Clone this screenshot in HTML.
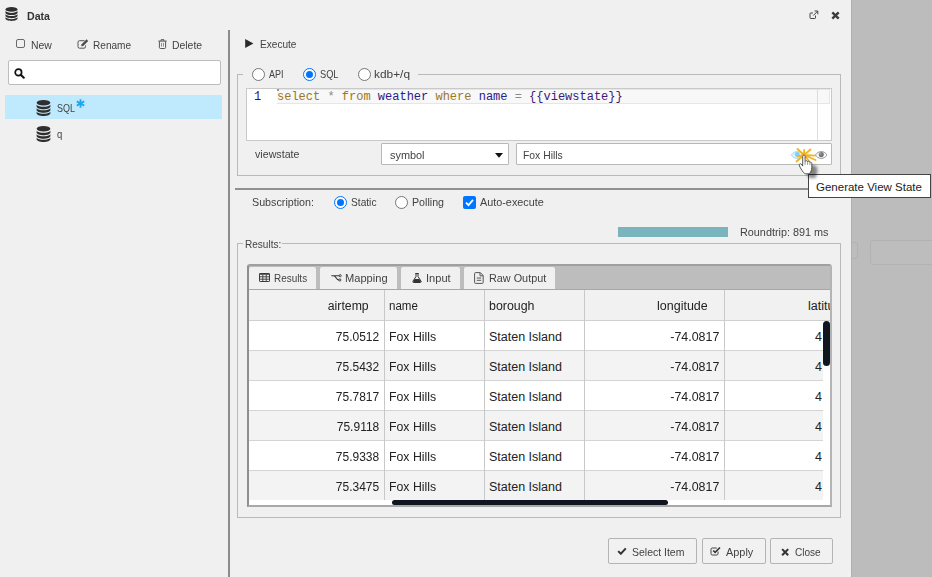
<!DOCTYPE html>
<html>
<head>
<meta charset="utf-8">
<title>Data</title>
<style>
html,body{margin:0;padding:0;}
body{width:932px;height:577px;overflow:hidden;background:#bcbcbc;position:relative;
  font-family:"Liberation Sans",sans-serif;font-size:11px;color:#333;}
*{box-sizing:border-box;}
.abs{position:absolute;}
svg.abs{z-index:2;}
.t{position:absolute;white-space:nowrap;line-height:14px;font-size:11.5px;transform-origin:0 50%;color:#424242;}
#dlg{position:absolute;left:0;top:0;width:851px;height:577px;background:#f0f0f0;}
/* behind overlay */
.ghost{position:absolute;border:1px solid #b2b2b2;border-radius:3px;background:#bdbdbd;}
/* left pane */
#search{left:8px;top:60px;width:213px;height:25px;background:#fff;border:1px solid #bdbdbd;border-radius:2px;}
#selrow{left:5px;top:95px;width:217px;height:24px;background:#bfe9fd;}
#vdiv{left:228px;top:30px;width:2px;height:547px;background:#8c8c8c;}
/* right pane */
fieldset{margin:0;padding:0;}
.fs{position:absolute;border:1px solid #b9b9b9;}
.radio{position:absolute;width:13px;height:13px;border-radius:50%;border:1px solid #767676;background:#fff;}
.radio.on{border:1.5px solid #0075ff;}
.radio.on::after{content:"";position:absolute;left:1.5px;top:1.5px;width:7px;height:7px;border-radius:50%;background:#0075ff;}
#editor{left:246px;top:88px;width:586px;height:53px;background:#fff;border:1px solid #c9c9c9;}
.code{font-family:"Liberation Mono",monospace;font-size:12px;line-height:14px;}
.kw{color:#9e7622;} .id{color:#2a1a8a;} .op{color:#8a8a8a;} .vs{color:#3b1a7a;}
.inp{position:absolute;background:#fff;border:1px solid #b8b8b8;border-radius:1px;height:22px;}
#hr{left:235px;top:188px;width:607px;height:2px;background:#909090;}
/* tabs + grid */
#tabs{left:247px;top:264px;width:585px;height:243px;background:#bdbdbd;border-radius:3px 3px 0 0;border-left:2px solid #8e8e8e;border-top:2px solid #a0a0a0;border-right:2px solid #b4b4b4;border-bottom:2px solid #a8a8a8;overflow:hidden;}
.tab{position:absolute;top:267px;height:22px;background:#f0f0f0;border-radius:2px 2px 0 0;}
#grid{left:249px;top:290px;width:581px;height:215px;background:#fff;overflow:hidden;}
.hrow{position:absolute;left:0;top:0;width:581px;height:31px;background:#f1f1f1;border-bottom:1px solid #d0d0d0;}
#rows{left:0;top:31px;width:574px;height:179px;overflow:hidden;}
.row{position:absolute;left:0;width:574px;height:30px;border-bottom:1px solid #d4d4d4;background:#fff;}
.row.alt{background:#f3f3f3;}
.cd{position:absolute;top:0;width:1px;height:210px;background:#c8c8c8;}
.gt{position:absolute;white-space:nowrap;font-size:12.5px;line-height:32px;height:30px;color:#222;transform-origin:0 50%;}
.gt.r{transform-origin:100% 50%;}
.btn{position:absolute;top:538px;height:26px;background:#f1f1f1;border:1px solid #b4b4b4;border-radius:2px;}
#tip{left:808px;top:174px;width:123px;height:24px;background:#fff;border:1px solid #444;}
</style>
<style id="fit">
#ttl{transform:scaleX(0.965)}
#tnew{transform:scaleX(0.908)}
#tren{transform:scaleX(0.876)}
#tdel{transform:scaleX(0.905)}
#tsql{transform:scaleX(0.782)}
#tq{transform:scaleX(0.827)}
#texe{transform:scaleX(0.878)}
#tapi{transform:scaleX(0.782)}
#tsql2{transform:scaleX(0.804)}
#tkdb{transform:scaleX(1.033)}
#tvs{transform:scaleX(0.928)}
#tsym{transform:scaleX(0.947)}
#tfox{transform:scaleX(0.901)}
#tsub{transform:scaleX(0.933)}
#tsta{transform:scaleX(0.886)}
#tpol{transform:scaleX(0.927)}
#taut{transform:scaleX(0.941)}
#trt{transform:scaleX(0.942)}
#tres{transform:scaleX(0.873)}
#tb1{transform:scaleX(0.863)}
#tb2{transform:scaleX(0.965)}
#tb3{transform:scaleX(0.962)}
#tb4{transform:scaleX(0.942)}
#tbs{transform:scaleX(0.911)}
#tba{transform:scaleX(0.949)}
#tbc{transform:scaleX(0.874)}
#ttip{transform:scaleX(1.000)}
.g-air{transform:scaleX(0.981)}
.g-name{transform:scaleX(0.924)}
.g-bor{transform:scaleX(0.992)}
.g-lon{transform:scaleX(0.999)}
.g-num{transform:scaleX(0.960)}
.g-fox{transform:scaleX(0.985)}
.g-si{transform:scaleX(1.000)}
.g-ln{transform:scaleX(0.995)}
</style>
</head>
<body>
<!-- ghost controls behind overlay -->
<div class="ghost" style="left:851px;top:242px;width:7px;height:17px;border-left:none;border-radius:0 3px 3px 0;"></div>
<div class="ghost" style="left:870px;top:240px;width:70px;height:25px;"></div>

<div class="abs" style="left:851px;top:0;width:1px;height:577px;background:#b0b0b0;"></div>
<div id="dlg">
  <!-- title -->
  <svg class="abs" style="left:5px;top:7px" width="13" height="14" viewBox="0 0 14 15.8"><g fill="#2f2f2f"><ellipse cx="7" cy="2.700" rx="6.800" ry="2.700"/><path d="M.2 4.600v1.800C.2 7.900 3.200 9.100 7 9.100s6.800-1.200 6.800-2.700V4.600C12.700 5.900 10 6.700 7 6.700S1.300 5.900.2 4.600z"/><path d="M.2 8.100v1.800c0 1.500 3 2.700 6.800 2.700s6.800-1.200 6.800-2.700V8.100C12.700 9.400 10 10.200 7 10.200S1.300 9.400.2 8.100z"/><path d="M.2 11.600v1.400c0 1.500 3 2.700 6.800 2.700s6.800-1.200 6.800-2.700v-1.400c-1.100 1.300-3.800 2.100-6.800 2.100S1.300 12.900.2 11.600z"/></g></svg>
  <div class="t" id="ttl" style="left:27px;top:9px;font-weight:bold;font-size:11px;color:#333;">Data</div>

  <!-- toolbar -->
  <div class="abs" style="left:16px;top:39px;width:9px;height:9px;border:1px solid #6a6a6a;border-radius:2px;"></div>
  <div class="t" id="tnew" style="left:31px;top:38px;">New</div>
  <div class="t" id="tren" style="left:93px;top:38px;">Rename</div>
  <div class="t" id="tdel" style="left:172px;top:38px;">Delete</div>

  <div class="abs" id="search"></div>
  <div class="abs" id="selrow"></div>
  <div class="t" id="tsql" style="left:57px;top:101px;">SQL</div>
  <div class="t" id="tq" style="left:57px;top:127px;">q</div>
  <div class="abs" id="vdiv"></div>

  <!-- execute -->
  <div class="t" id="texe" style="left:260px;top:37px;">Execute</div>

  <!-- query fieldset -->
  <div class="fs" style="left:237px;top:74px;width:604px;height:102px;"></div>
  <div class="abs" style="left:243px;top:70px;width:175px;height:10px;background:#f0f0f0;"></div>
  <div class="radio" style="left:252px;top:68px;"></div>
  <div class="t" id="tapi" style="left:269px;top:67px;">API</div>
  <div class="radio on" style="left:303px;top:68px;"></div>
  <div class="t" id="tsql2" style="left:320px;top:67px;">SQL</div>
  <div class="radio" style="left:358px;top:68px;"></div>
  <div class="t" id="tkdb" style="left:374px;top:67px;">kdb+/q</div>

  <div class="abs" id="editor"></div>
  <div class="abs" style="left:277px;top:89px;width:553px;height:15px;background:#f8f8f8;border:1px solid #e6e6e6;border-left:none;"></div>
  <div class="abs" style="left:817px;top:89px;width:1px;height:51px;background:#dcdcdc;"></div>
  <div class="abs" style="left:277px;top:89px;width:2px;height:2px;background:#999;"></div>
  <div class="t code" style="left:254px;top:90px;color:#1a1a8c;">1</div>
  <div class="t code" id="tcode" style="left:277px;top:90px;"><span class="kw">select</span> <span class="op">*</span> <span class="kw">from</span> <span class="id">weather</span> <span class="kw">where</span> <span class="id">name</span> <span class="op">=</span> <span class="vs">{{viewstate}}</span></div>

  <div class="t" id="tvs" style="left:255px;top:147px;">viewstate</div>
  <div class="inp" style="left:381px;top:143px;width:128px;"></div>
  <div class="t" id="tsym" style="left:390px;top:148px;">symbol</div>
  <div class="inp" style="left:516px;top:143px;width:316px;"></div>
  <div class="t" id="tfox" style="left:523px;top:148px;">Fox Hills</div>

  <div class="abs" id="hr"></div>

  <!-- subscription -->
  <div class="t" id="tsub" style="left:252px;top:195px;">Subscription:</div>
  <div class="radio on" style="left:334px;top:196px;"></div>
  <div class="t" id="tsta" style="left:351px;top:195px;">Static</div>
  <div class="radio" style="left:395px;top:196px;"></div>
  <div class="t" id="tpol" style="left:412px;top:195px;">Polling</div>
  <div class="abs" style="left:463px;top:196px;width:13px;height:13px;background:#0075ff;border-radius:2px;"></div>
  <div class="t" id="taut" style="left:480px;top:195px;">Auto-execute</div>

  <div class="abs" style="left:618px;top:227px;width:110px;height:10px;background:#7ab5be;"></div>
  <div class="t" id="trt" style="left:740px;top:225px;">Roundtrip: 891 ms</div>

  <!-- results fieldset -->
  <div class="fs" style="left:237px;top:243px;width:604px;height:275px;"></div>
  <div class="abs" style="left:243px;top:238px;width:39px;height:10px;background:#f0f0f0;"></div>
  <div class="t" id="tres" style="left:245px;top:237px;">Results:</div>

  <div class="abs" id="tabs"></div>
  <div class="tab" style="left:249px;width:67px;"></div>
  <div class="tab" style="left:320px;width:77px;"></div>
  <div class="tab" style="left:401px;width:59px;"></div>
  <div class="tab" style="left:464px;width:91px;"></div>
  <div class="abs" style="left:249px;top:289px;width:581px;height:1px;background:#a8a8a8;"></div>
  <div class="t" id="tb1" style="left:274px;top:271px;">Results</div>
  <div class="t" id="tb2" style="left:345px;top:271px;">Mapping</div>
  <div class="t" id="tb3" style="left:426px;top:271px;">Input</div>
  <div class="t" id="tb4" style="left:489px;top:271px;">Raw Output</div>

  <div class="abs" id="grid">
    <div class="hrow"></div>
    <div class="abs" id="rows">
      <div class="row" style="top:0px"><span class="gt r g-num" style="right:444px">75.0512</span><span class="gt g-fox" style="left:140px">Fox Hills</span><span class="gt g-si" style="left:240px">Staten Island</span><span class="gt r g-ln" style="right:104px">-74.0817</span><span class="gt g-lat" style="left:566px;width:7px;overflow:hidden">40.5772</span></div>
      <div class="row alt" style="top:30px"><span class="gt r g-num" style="right:444px">75.5432</span><span class="gt g-fox" style="left:140px">Fox Hills</span><span class="gt g-si" style="left:240px">Staten Island</span><span class="gt r g-ln" style="right:104px">-74.0817</span><span class="gt g-lat" style="left:566px;width:7px;overflow:hidden">40.5772</span></div>
      <div class="row" style="top:60px"><span class="gt r g-num" style="right:444px">75.7817</span><span class="gt g-fox" style="left:140px">Fox Hills</span><span class="gt g-si" style="left:240px">Staten Island</span><span class="gt r g-ln" style="right:104px">-74.0817</span><span class="gt g-lat" style="left:566px;width:7px;overflow:hidden">40.5772</span></div>
      <div class="row alt" style="top:90px"><span class="gt r g-num" style="right:444px">75.9118</span><span class="gt g-fox" style="left:140px">Fox Hills</span><span class="gt g-si" style="left:240px">Staten Island</span><span class="gt r g-ln" style="right:104px">-74.0817</span><span class="gt g-lat" style="left:566px;width:7px;overflow:hidden">40.5772</span></div>
      <div class="row" style="top:120px"><span class="gt r g-num" style="right:444px">75.9338</span><span class="gt g-fox" style="left:140px">Fox Hills</span><span class="gt g-si" style="left:240px">Staten Island</span><span class="gt r g-ln" style="right:104px">-74.0817</span><span class="gt g-lat" style="left:566px;width:7px;overflow:hidden">40.5772</span></div>
      <div class="row alt" style="top:150px"><span class="gt r g-num" style="right:444px">75.3475</span><span class="gt g-fox" style="left:140px">Fox Hills</span><span class="gt g-si" style="left:240px">Staten Island</span><span class="gt r g-ln" style="right:104px">-74.0817</span><span class="gt g-lat" style="left:566px;width:7px;overflow:hidden">40.5772</span></div>
    </div>
    <span class="gt r g-air" style="right:461px;top:0px">airtemp</span>
    <span class="gt g-name" style="left:140px;top:0px">name</span>
    <span class="gt g-bor" style="left:240px;top:0px">borough</span>
    <span class="gt r g-lon" style="right:122px;top:0px">longitude</span>
    <span class="gt g-latt" style="left:559px;top:0px">latitude</span>
    <div class="cd" style="left:135px"></div>
    <div class="cd" style="left:235px"></div>
    <div class="cd" style="left:335px"></div>
    <div class="cd" style="left:475px"></div>
    <div class="abs" style="left:574px;top:31px;width:7px;height:45px;border-radius:3.5px;background:#10151f;"></div>
    <div class="abs" style="left:143px;top:210px;width:276px;height:5px;border-radius:2.5px;background:#10151f;"></div>
  </div>

  <!-- icons -->
  <svg class="abs" style="left:36px;top:100px" width="15" height="16" viewBox="0 0 14 15.8"><g fill="#2f2f2f"><ellipse cx="7" cy="2.700" rx="6.800" ry="2.700"/><path d="M.2 4.600v1.800C.2 7.900 3.200 9.100 7 9.100s6.800-1.200 6.800-2.700V4.600C12.700 5.900 10 6.700 7 6.700S1.300 5.900.2 4.600z"/><path d="M.2 8.100v1.800c0 1.500 3 2.700 6.800 2.700s6.800-1.200 6.800-2.700V8.100C12.700 9.400 10 10.200 7 10.200S1.300 9.400.2 8.100z"/><path d="M.2 11.600v1.400c0 1.500 3 2.700 6.800 2.700s6.800-1.200 6.800-2.700v-1.400c-1.100 1.300-3.800 2.100-6.800 2.100S1.300 12.900.2 11.600z"/></g></svg>
  <svg class="abs" style="left:36px;top:126px" width="15" height="16" viewBox="0 0 14 15.8"><g fill="#2f2f2f"><ellipse cx="7" cy="2.700" rx="6.800" ry="2.700"/><path d="M.2 4.600v1.800C.2 7.900 3.200 9.100 7 9.100s6.800-1.200 6.800-2.700V4.600C12.700 5.900 10 6.700 7 6.700S1.300 5.900.2 4.600z"/><path d="M.2 8.100v1.800c0 1.500 3 2.700 6.800 2.700s6.800-1.200 6.800-2.700V8.100C12.700 9.400 10 10.200 7 10.200S1.300 9.400.2 8.100z"/><path d="M.2 11.600v1.400c0 1.500 3 2.700 6.800 2.700s6.800-1.200 6.800-2.700v-1.400c-1.100 1.300-3.800 2.100-6.800 2.100S1.300 12.900.2 11.600z"/></g></svg>
  <svg class="abs" style="left:76px;top:99px" width="9" height="9" viewBox="0 0 9 9"><g stroke="#1ea7f0" stroke-width="1.8" stroke-linecap="butt"><path d="M4.500.3v8.400M.8 2.400l7.400 4.200M8.200 2.400L.8 6.600"/></g></svg>
  <svg class="abs" style="left:77px;top:38.500px" width="12" height="10" viewBox="0 0 12 10"><path d="M7.500 1.700H2.500a1.500 1.500 0 0 0-1.500 1.500v4.500A1.500 1.500 0 0 0 2.500 9.200H7a1.500 1.500 0 0 0 1.500-1.500V6.300" fill="none" stroke="#555" stroke-width="1"/><path d="M4.600 5.300L9.600.3l1.600 1.600L6.200 6.900l-2 .4z" fill="#4a4a4a"/></svg>
  <svg class="abs" style="left:158px;top:39px" width="9" height="10" viewBox="0 0 9 10"><path d="M.3 2.100h8.400M3.100 2V.7h2.800V2M1.400 2.300v6.300c0 .5.400.9.900.9h4.400c.5 0 .9-.4.900-.9V2.300" fill="none" stroke="#555" stroke-width="1"/><path d="M3.500 3.900v3.700M5.500 3.900v3.700" fill="none" stroke="#777" stroke-width=".8"/></svg>
  <svg class="abs" style="left:14px;top:68px" width="11" height="11" viewBox="0 0 11 11"><circle cx="4.400" cy="4.400" r="3.200" fill="none" stroke="#111" stroke-width="1.700"/><path d="M6.800 6.800l3 3" stroke="#111" stroke-width="2" stroke-linecap="round"/></svg>
  <svg class="abs" style="left:809px;top:10px" width="10" height="10" viewBox="0 0 10 10"><path d="M6.500 5.500v2.300a.7.700 0 0 1-.7.700H1.700a.7.700 0 0 1-.7-.7V3.700A.7.700 0 0 1 1.700 3H4" fill="none" stroke="#444" stroke-width="1"/><path d="M5.500 1h3.300v3.300M8.600 1.200L4.300 5.500" fill="none" stroke="#444" stroke-width="1"/></svg>
  <svg class="abs" style="left:831px;top:11px" width="9" height="9" viewBox="0 0 9 9"><path d="M1.300 1.300l6.400 6.400M7.700 1.300L1.300 7.700" stroke="#3c3c3c" stroke-width="2.400"/></svg>
  <svg class="abs" style="left:245px;top:39px" width="9" height="9" viewBox="0 0 9 9"><path d="M.2 0l8.200 4.500L.2 9z" fill="#2a2a2a"/></svg>
  <svg class="abs" style="left:495px;top:153px" width="8" height="5" viewBox="0 0 8 5"><path d="M0 0h8L4 4.700z" fill="#111"/></svg>
  <svg class="abs" style="left:463px;top:196px" width="13" height="13" viewBox="0 0 13 13"><path d="M3 6.700l2.500 2.500L10 3.800" fill="none" stroke="#fff" stroke-width="1.800"/></svg>
  <svg class="abs" style="left:259px;top:273px" width="11" height="9" viewBox="0 0 11 9"><rect x=".5" y=".5" width="10" height="8" rx=".6" fill="none" stroke="#3a3a3a" stroke-width="1"/><path d="M.5 1.100h10" stroke="#3a3a3a" stroke-width="1.300"/><path d="M.5 3.800h10M.5 6.200h10M3.800 1.500v7M7.200 1.500v7" stroke="#3a3a3a" stroke-width=".9" fill="none"/></svg>
  <svg class="abs" style="left:331px;top:274px" width="11" height="8" viewBox="0 0 11 8"><path d="M.3 1.700h8M2.600 1.700c2.400 0 2.600 4.300 5.400 4.300" fill="none" stroke="#333" stroke-width="1.100"/><circle cx="9.200" cy="1.700" r="1.100" fill="none" stroke="#333" stroke-width=".9"/><circle cx="8.800" cy="6" r="1.100" fill="none" stroke="#333" stroke-width=".9"/></svg>
  <svg class="abs" style="left:412px;top:273px" width="10" height="10" viewBox="0 0 10 10"><path d="M3.300.500h3.400M4 .5v3L.9 8.300c-.3.600 0 1.200.7 1.200h6.800c.7 0 1-.6.700-1.200L6 3.500v-3" fill="none" stroke="#333" stroke-width="1"/><path d="M2.700 6h4.600l1.500 2.600c.1.300 0 .5-.3.500h-7c-.3 0-.4-.2-.3-.5z" fill="#333"/></svg>
  <svg class="abs" style="left:474px;top:272px" width="10" height="12" viewBox="0 0 10 12"><path d="M1.500.6h4.800l2.900 2.900v7a.9.900 0 0 1-.9.900H1.500a.9.900 0 0 1-.9-.9V1.500a.9.900 0 0 1 .9-.9z" fill="none" stroke="#555" stroke-width="1"/><path d="M6 .8v3h3M2.800 6h4.400M2.800 8.300h4.400" fill="none" stroke="#555" stroke-width="1"/></svg>
  <svg class="abs" style="left:617px;top:547px" width="10" height="8" viewBox="0 0 11 9"><path d="M1.200 4.600l3 3L9.800 1.600" fill="none" stroke="#333" stroke-width="2.200"/></svg>
  <svg class="abs" style="left:710px;top:545.500px" width="11" height="10" viewBox="0 0 11 10"><path d="M8 5.500v2.300c0 .7-.5 1.200-1.200 1.200H2.200C1.500 9 1 8.500 1 7.800V3.200C1 2.500 1.500 2 2.200 2h4.600" fill="none" stroke="#444" stroke-width="1"/><path d="M3.200 4.500l1.900 1.900L10 1.500" fill="none" stroke="#333" stroke-width="1.600"/></svg>
  <svg class="abs" style="left:780.500px;top:547.500px" width="8.500" height="8.500" viewBox="0 0 9 9"><path d="M1.200 1.200l6.400 6.400M7.600 1.200L1.200 7.600" stroke="#333" stroke-width="2.200"/></svg>
  <svg class="abs" style="left:791px;top:150.500px" width="12.500" height="8" viewBox="0 0 14 9"><path d="M.5 4.500C2 2 4.300.7 7 .7s5 1.300 6.500 3.800C12 7 9.700 8.300 7 8.300S2 7 .5 4.500z" fill="#e6f6ff" stroke="#8ed4f7" stroke-width="1"/><circle cx="7" cy="4" r="2.800" fill="#7fd0f8"/></svg>
  <svg class="abs" style="left:814.500px;top:150.500px" width="12.500" height="8" viewBox="0 0 14 9"><path d="M.5 4.500C2 2 4.300.7 7 .7s5 1.300 6.500 3.800C12 7 9.700 8.300 7 8.300S2 7 .5 4.500z" fill="#fff" stroke="#8a8a8a" stroke-width="1"/><circle cx="7" cy="4" r="2.900" fill="#777"/><circle cx="6" cy="3" r="1" fill="#aaa"/></svg>

  <svg class="abs" style="left:844px;top:570px" width="7" height="7" viewBox="0 0 7 7"><path d="M6.500 1.500L1.500 6.500M6.500 4L4 6.500" stroke="#fafafa" stroke-width="1" stroke-dasharray="1 1"/></svg>
  <!-- buttons -->
  <div class="btn" style="left:608px;width:89px;"></div>
  <div class="btn" style="left:702px;width:64px;"></div>
  <div class="btn" style="left:770px;width:63px;"></div>
  <div class="t" id="tbs" style="left:632px;top:545px;">Select Item</div>
  <div class="t" id="tba" style="left:726px;top:545px;">Apply</div>
  <div class="t" id="tbc" style="left:795px;top:545px;">Close</div>
</div>

<!-- tooltip -->
<div class="abs" id="tip"></div>
<div class="t" id="ttip" style="left:816px;top:179.500px;color:#222;">Generate View State</div>
<svg class="abs" style="left:794px;top:146px;overflow:visible" width="24" height="32" viewBox="0 0 24 32">
<defs><filter id="sh" x="-50%" y="-50%" width="220%" height="220%"><feGaussianBlur stdDeviation="1.600"/></filter></defs>
<g stroke="#f0b428" stroke-width="1.900" stroke-linecap="round"><path d="M10 9L3.500 3M10 9L10.200 4M10 9L16.500 3.500M10 9L21 9.600M10 9L21.500 14M10 9L2.500 15.500M10 9L3.500 10.500M10 9L15 15"/></g>
<path d="M9 18c3-2 9-2 10.500 1 1 3 0 7-1.500 10.500H12C9 27 8 22 9 18z" transform="translate(3.500 2.500)" fill="#000" opacity=".45" filter="url(#sh)"/>
<path d="M8.700 10.600c0-1 .5-1.500 1.200-1.500s1.200.5 1.200 1.500v4.900c.3-.6.800-.9 1.400-.8.600.1 1 .5 1.100 1.100.3-.5.800-.7 1.400-.5.500.2.800.6.900 1.200.4-.4.900-.4 1.300-.1.400.3.600.7.600 1.200v3.900c0 2.600-1 4.600-2.300 5.900-1.300.6-3.700.6-5 0-1.500-1.300-3-3.500-4.400-6.200-.5-1-.9-1.700-.9-2.300 0-.7.500-1.100 1.100-1.100.7 0 1.200.4 1.700 1.200l.7 1.100z" fill="#fff" stroke="#444" stroke-width=".9" stroke-linejoin="round"/>
<path d="M11.100 15.800v3M13.600 16.300v2.500M15.900 17.100v2" stroke="#777" stroke-width=".8" fill="none"/>
</svg>
</body>
</html>
